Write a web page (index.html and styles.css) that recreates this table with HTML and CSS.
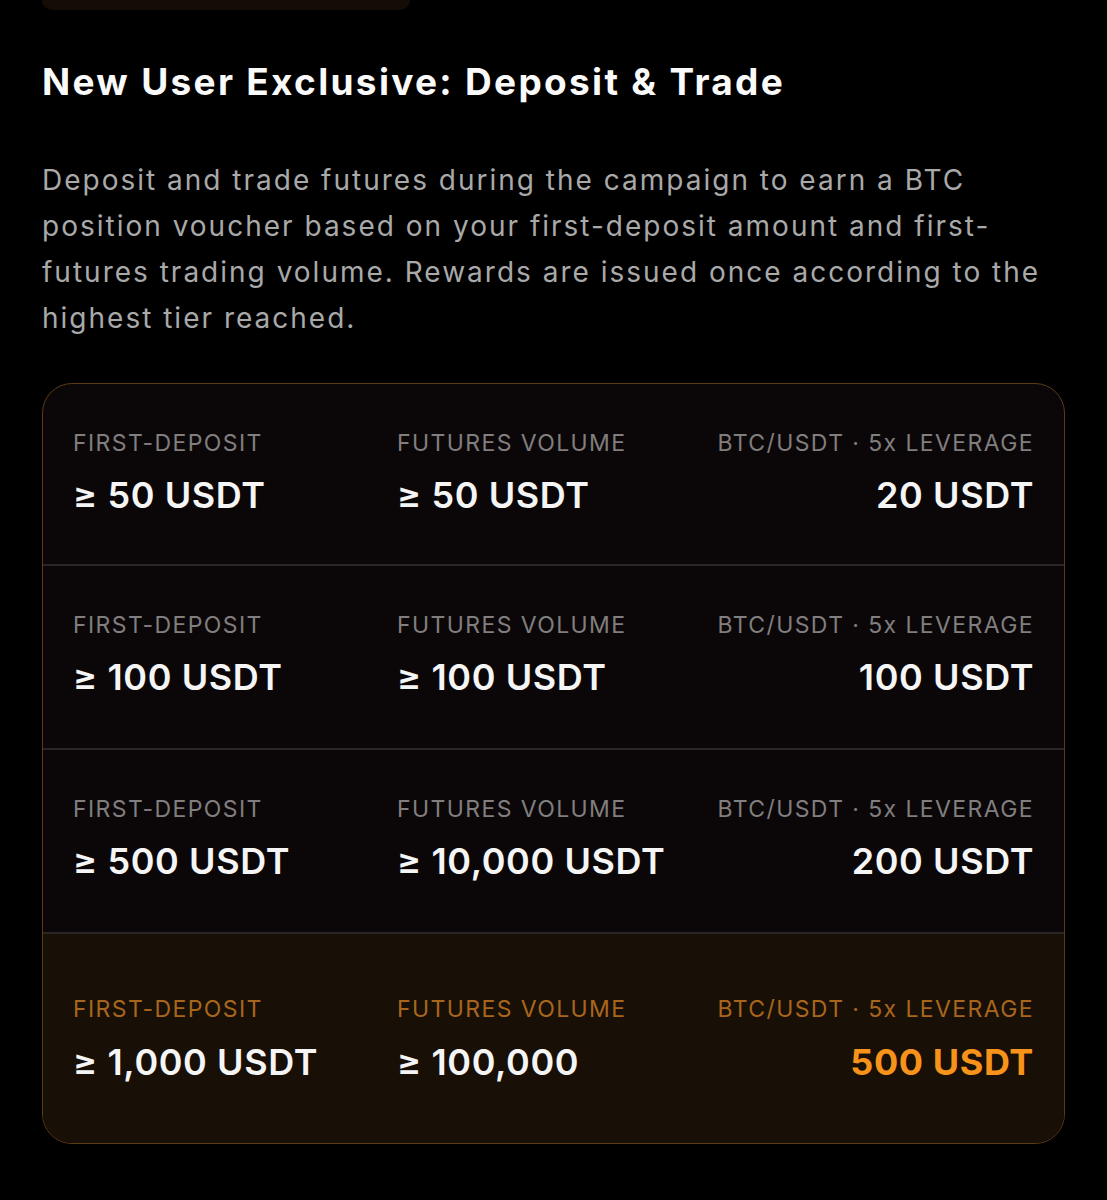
FILE: index.html
```html
<!DOCTYPE html>
<html lang="en">
<head>
    <meta charset="UTF-8">
    <meta name="viewport" content="width=device-width, initial-scale=1.0">
    <title>New User Exclusive</title>
    <link rel="stylesheet" href="styles.css">
</head>
<body>
    <div class="top-card"></div>
    <section class="campaign">
        <h2>New User Exclusive: Deposit &amp; Trade</h2>
        <p class="intro">Deposit and trade futures during the campaign to earn a BTC position voucher based on your first-deposit amount and first-futures trading volume. Rewards are issued once according to the highest tier reached.</p>

        <div class="tiers">
            <div class="tier">
                <div class="cell">
                    <span class="label">FIRST-DEPOSIT</span>
                    <span class="value">≥ 50 USDT</span>
                </div>
                <div class="cell">
                    <span class="label">FUTURES VOLUME</span>
                    <span class="value">≥ 50 USDT</span>
                </div>
                <div class="cell reward">
                    <span class="label">BTC/USDT · 5x LEVERAGE</span>
                    <span class="value">20 USDT</span>
                </div>
            </div>
            <div class="tier">
                <div class="cell">
                    <span class="label">FIRST-DEPOSIT</span>
                    <span class="value">≥ 100 USDT</span>
                </div>
                <div class="cell">
                    <span class="label">FUTURES VOLUME</span>
                    <span class="value">≥ 100 USDT</span>
                </div>
                <div class="cell reward">
                    <span class="label">BTC/USDT · 5x LEVERAGE</span>
                    <span class="value">100 USDT</span>
                </div>
            </div>
            <div class="tier">
                <div class="cell">
                    <span class="label">FIRST-DEPOSIT</span>
                    <span class="value">≥ 500 USDT</span>
                </div>
                <div class="cell">
                    <span class="label">FUTURES VOLUME</span>
                    <span class="value">≥ 10,000 USDT</span>
                </div>
                <div class="cell reward">
                    <span class="label">BTC/USDT · 5x LEVERAGE</span>
                    <span class="value">200 USDT</span>
                </div>
            </div>
            <div class="tier top">
                <div class="cell">
                    <span class="label">FIRST-DEPOSIT</span>
                    <span class="value">≥ 1,000 USDT</span>
                </div>
                <div class="cell">
                    <span class="label">FUTURES VOLUME</span>
                    <span class="value">≥ 100,000</span>
                </div>
                <div class="cell reward">
                    <span class="label">BTC/USDT · 5x LEVERAGE</span>
                    <span class="value">500 USDT</span>
                </div>
            </div>
        </div>
    </section>
</body>
</html>
```

FILE: styles.css
```css
body {
    font-family: Inter, "Noto Sans", sans-serif;
    margin: 0;
    padding: 0;
    background-color: #000;
    color: #f2f2f2;
}
.top-card {
    width: 368px;
    height: 10px;
    margin-left: 42px;
    background-color: #140c05;
    border-radius: 0 0 16px 16px;
}
.campaign {
    padding: 0 42px 60px;
}
.campaign h2 {
    margin: 49px 0 0;
    font-size: 37px;
    font-weight: 700;
    line-height: 46px;
    letter-spacing: 2.3px;
    color: #fafafa;
}
.intro {
    margin: 52px 0 0;
    width: 1000px;
    font-size: 28px;
    line-height: 46px;
    letter-spacing: 2px;
    color: #a9a9a9;
}
.tiers {
    margin-top: 42px;
    border: 1.5px solid #5b3b14;
    border-radius: 30px;
    overflow: hidden;
    background-color: #0b0708;
}
.tier {
    display: grid;
    grid-template-columns: 324px 1fr 1fr;
    padding: 35px 30px 49px;
    border-top: 2px solid #2a2627;
}
.tier:first-child {
    border-top: none;
    padding-bottom: 47px;
}
.tier.top {
    padding: 51px 30px 59px;
    background-color: #180f07;
}
.cell {
    display: flex;
    flex-direction: column;
    gap: 6px;
}
.tier.top .cell {
    gap: 7px;
}
.cell.reward {
    align-items: flex-end;
}
.label {
    font-size: 23px;
    line-height: 48px;
    letter-spacing: 1.4px;
    color: #807e7e;
    white-space: nowrap;
}
.value {
    font-size: 36px;
    line-height: 44px;
    font-weight: 600;
    letter-spacing: 0.6px;
    color: #f5f5f5;
    white-space: nowrap;
}
.tier.top .label {
    color: #a8661c;
}
.tier.top .reward .value {
    color: #f7931a;
    font-weight: 700;
}
```
